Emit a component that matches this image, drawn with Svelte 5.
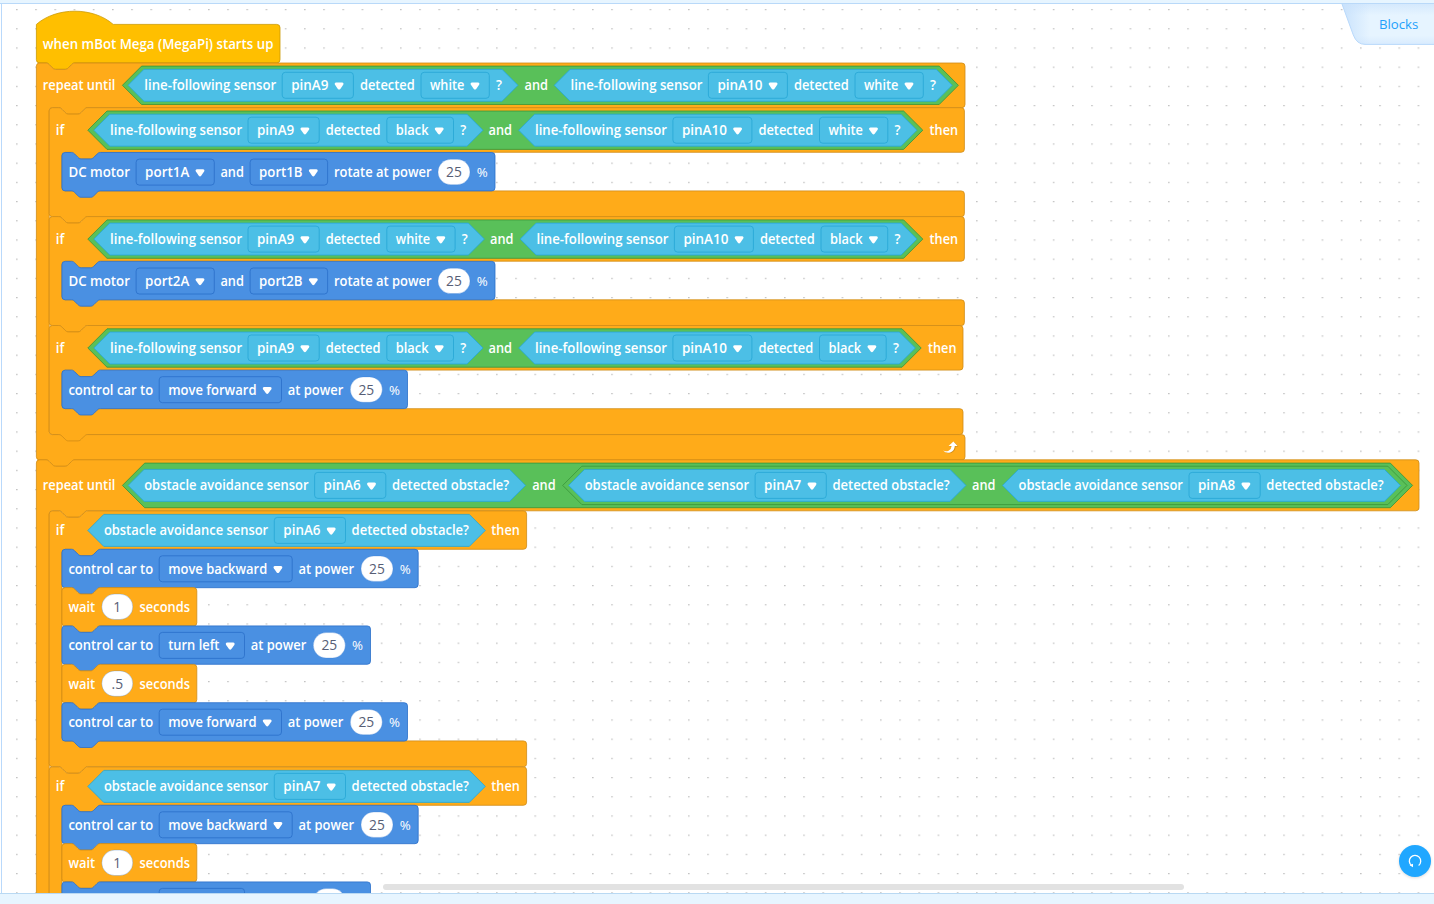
<script>
  const R = 3.2;
  const VIEW_BOTTOM = 893;
  const NOTCH = 'c 1.6,0 2.4,.8 3.2,1.6 l 3.2,3.2 c .8,.8 1.6,1.6 3.2,1.6 h 9.6 c 1.6,0 2.4,-.8 3.2,-1.6 l 3.2,-3.2 c .8,-.8 1.6,-1.6 3.2,-1.6';
  const TAB = 'c -1.6,0 -2.4,.8 -3.2,1.6 l -3.2,3.2 c -.8,.8 -1.6,1.6 -3.2,1.6 h -9.6 c -1.6,0 -2.4,-.8 -3.2,-1.6 l -3.2,-3.2 c -.8,-.8 -1.6,-1.6 -3.2,-1.6';
  const ARROW = 'M.3 9.2Q3 10.6 5.8 9.3Q8.6 8 8.8 4.6H5.8L10.6 0L14.8 4.6H12Q11.6 9.3 8 10.9Q3.3 12.6 .3 9.2Z';
  const corner = (dx, dy, sweep = 1) => `a ${R},${R} 0 0 ${sweep} ${dx * R},${dy * R}`;

  const top = (x, y, r) => `M ${x},${y + R} ${corner(1, -1)} H ${x + 9.6} ${NOTCH} H ${r - R} ${corner(1, 1)}`;
  const bottom = (x, r, b) => `V ${b - R} ${corner(-1, 1)} H ${x + 38.4} ${TAB} H ${x + R} ${corner(-1, -1)} Z`;
  const stack = (x, y, r, b) => `${top(x, y, r)} ${bottom(x, r, b)}`;
  const cBlock = (x, y, r, hb, mb, b) =>
    `${top(x, y, r)} V ${hb - R} ${corner(-1, 1)} H ${x + 12.8 + 38.4} ${TAB} H ${x + 12.8 + R} ${corner(-1, 1, 0)} V ${mb - R} ${corner(1, 1, 0)} H ${r - R} ${corner(1, 1)} ${bottom(x, r, b)}`;
  const hat = (x, y, r, b) => `M ${x},${y} c 20,-17.6 56.8,-17.6 76.8,0 H ${r - R} ${corner(1, 1)} ${bottom(x, r, b)}`;
  const hex = (x, r, cy, h) => {
    const s = h / 2;
    return `M ${x},${cy} L ${x + s},${cy - s} H ${r - s} L ${r},${cy} L ${r - s},${cy + s} H ${x + s} Z`;
  };

  const W = {
    'when mBot Mega (MegaPi) starts up': 230.6, 'repeat until': 72.5, if: 8.5, then: 28.5, and: 23.5,
    'line-following sensor': 132, detected: 54.8, '?': 6, 'obstacle avoidance sensor': 164.3,
    'detected obstacle?': 117.4, 'DC motor': 61.5, 'rotate at power': 97.5, '%': 11,
    'control car to': 84.7, 'at power': 55.5, wait: 26.8, seconds: 50.3,
    pinA9: 37.2, pinA10: 45, pinA6: 37.2, pinA7: 37.2, pinA8: 37.2, white: 34.3, black: 32.7,
    port1A: 44.2, port1B: 43.5, port2A: 44.2, port2B: 43.5,
    'move forward': 88.3, 'move backward': 99, 'turn left': 51.3
  };

  const shapes = [], labels = [], fields = [], bubbles = [];
  const shape = (kind, d) => shapes.push({ kind, d });
  const label = (x, cy, t) => {
    if (cy < VIEW_BOTTOM) labels.push({ x: x - 0.2, y: cy + 5, t, w: W[t] });
  };
  const field = (kind, x, cy, t) => {
    fields.push({ kind, x: x - 0.3, cy, t, w: W[t] });
    return x + W[t] + 34;
  };

  function line(x, r, cy, pin, color) {
    shape('sense', hex(x, r, cy, 32));
    let p = x + 16.5;
    label(p, cy, 'line-following sensor');
    p = field('sense', p + 138, cy, pin) + 6.4;
    label(p, cy, 'detected');
    p = field('sense', p + 61.2, cy, color) + 6.6;
    label(p, cy, '?');
  }
  function obstacle(x, r, cy, pin) {
    shape('sense', hex(x, r, cy, 32));
    label(x + 16.3, cy, 'obstacle avoidance sensor');
    const p = field('sense', x + 186.8, cy, pin);
    label(p + 6, cy, 'detected obstacle?');
  }
  function motor(y, a, b) {
    const cy = y + 19.6;
    shape('action', stack(61.9, y, 495, y + 38.4));
    label(68.6, cy, 'DC motor');
    field('action', 136.4, cy, a);
    label(220.6, cy, 'and');
    field('action', 250.4, cy, b);
    label(334.2, cy, 'rotate at power');
    bubbles.push({ x: 438, cy, w: 32, t: '25' });
    label(477, cy, '%');
  }
  function car(y, dir) {
    const cy = y + 19.5;
    const end = 159.4 + W[dir] + 34;
    shape('action', stack(61.9, y, end + 125.8, y + 38.4));
    label(68.6, cy, 'control car to');
    field('action', 159.5, cy, dir);
    label(end + 6.3, cy, 'at power');
    bubbles.push({ x: end + 68.6, cy, w: 32, t: '25' });
    label(end + 107.5, cy, '%');
  }
  function wait(y, t) {
    const cy = y + 19.3;
    shape('control', stack(61.9, y, 196.8, y + 38.4));
    label(68.6, cy, 'wait');
    bubbles.push({ x: 101.8, cy, w: 31, t });
    label(139.8, cy, 'seconds');
  }

  shape('event', hat(36.4, 24.4, 280, 62.9));
  label(43, 44.2, 'when mBot Mega (MegaPi) starts up');

  shape('control', cBlock(36.4, 63, 965, 107.7, 434.6, 460));
  label(43, 85.3, 'repeat until');
  shape('logic', hex(122.4, 958.4, 85.3, 38.4));
  line(128, 518, 85.3, 'pinA9', 'white');
  label(524.8, 85.3, 'and');
  line(554.2, 952.2, 85.3, 'pinA10', 'white');

  const checks = [
    [107.7, 964.4, 'black', 'white', 483, 518.7, 917, 922.8],
    [216.6, 964.4, 'white', 'black', 484.4, 520.2, 917, 922.8],
    [325.5, 963, 'black', 'black', 483, 518.7, 915.4, 921.2]
  ];
  for (const [y, r, c1, c2, r1, l2, r2, g] of checks) {
    const cy = y + 22.5;
    shape('control', cBlock(49.2, y, r, y + 44.6, y + 83.2, y + 109));
    label(56, cy, 'if');
    shape('logic', hex(87.8, g, cy, 38.4));
    line(93.8, r1, cy, 'pinA9', c1);
    label(l2 - 30, cy, 'and');
    line(l2, r2, cy, 'pinA10', c2);
    label(g + 7, cy, 'then');
  }
  motor(152.5, 'port1A', 'port1B');
  motor(261.4, 'port2A', 'port2B');
  car(370.2, 'move forward');

  shape('control', cBlock(36.4, 459.8, 1419, 510.8, 1100, 1130));
  label(43, 485.4, 'repeat until');
  shape('logic', hex(122.4, 1412.6, 485.4, 44.6));
  obstacle(128.1, 525.6, 485.4, 'pinA6');
  label(532.4, 485.4, 'and');
  shape('logic', hex(562.7, 1407, 485.4, 38.4));
  obstacle(568.6, 966, 485.4, 'pinA7');
  label(972.2, 485.4, 'and');
  obstacle(1002.5, 1400.4, 485.4, 'pinA8');

  const body = [
    [38.4, car, 'move backward'],
    [76.7, wait, '1'],
    [115, car, 'turn left'],
    [153.5, wait, '.5'],
    [191.8, car, 'move forward']
  ];
  for (const [y, pin] of [[510.9, 'pinA6'], [766.9, 'pinA7']]) {
    shape('control', cBlock(49.2, y, 526.6, y + 38.4, y + 230, y + 255.9));
    label(56, y + 19.5, 'if');
    obstacle(87.8, 485.3, y + 19.5, pin);
    label(491.5, y + 19.5, 'then');
    for (const [dy, draw, arg] of body) {
      if (y + dy < VIEW_BOTTOM) draw(y + dy, arg);
    }
  }
</script>

<div class="app">
  <div class="strip top"></div>
  <main>
    <svg class="canvas" width="1432" height="889" viewBox="2 4 1432 889">
      <defs>
        <pattern id="grid" x="16" y="9" width="19.2" height="19.2" patternUnits="userSpaceOnUse">
          <rect x="0" y="0" width="1.6" height="1.2" fill="#c2c2c2" />
        </pattern>
      </defs>
      <rect x="2" y="4" width="1432" height="889" fill="url(#grid)" />
      {#each shapes as s}<path class={s.kind} d={s.d} />{/each}
      {#each fields as f}
        <rect class={f.kind} x={f.x} y={f.cy - 13} width={f.w + 34} height="26" rx="3.2" />
        {#if f.cy < VIEW_BOTTOM}
          <text x={f.x + 9} y={f.cy + 5} textLength={f.w} lengthAdjust="spacingAndGlyphs">{f.t}</text>
          <path class="caret" transform="translate({f.x + f.w + 15.2} {f.cy - 2.8})" d="M1.5 0H7.5C8.8 0 9.3 1.2 8.6 2.3L5.7 6.4Q4.5 7.8 3.3 6.4L.4 2.3C-.3 1.2.2 0 1.5 0Z" />
        {/if}
      {/each}
      {#each labels as l}
        <text class:thin={l.t === '%'} x={l.x} y={l.y} textLength={l.w} lengthAdjust="spacingAndGlyphs">{l.t}</text>
      {/each}
      {#each bubbles as b}
        <rect class="bubble" x={b.x} y={b.cy - 12.8} width={b.w} height="25.4" rx="12.7" />
        {#if b.cy < VIEW_BOTTOM}
          <text class="value" x={b.x + b.w / 2} y={b.cy + 5}>{b.t}</text>
        {/if}
      {/each}
      <path class="loop-shadow" transform="translate(943.6 441.9)" d={ARROW} />
      <path class="loop" transform="translate(942.8 441.4)" d={ARROW} />
    </svg>

    <div class="drawer">
      <svg width="94" height="42" viewBox="0 0 94 42">
        <defs>
          <linearGradient id="drawerFill" x1="0" y1="0" x2="0" y2="1">
            <stop offset="0" stop-color="#d5e9fd" /><stop offset=".28" stop-color="#e6f4ff" />
            <stop offset=".78" stop-color="#e6f4ff" /><stop offset="1" stop-color="#d8ebfe" />
          </linearGradient>
          <linearGradient id="drawerSide" x1="0" y1="0" x2="1" y2="0">
            <stop offset="0" stop-color="#c9e2fc" /><stop offset=".3" stop-color="#c9e2fc" stop-opacity="0" />
          </linearGradient>
        </defs>
        <path d="M2 0L13.3 31Q16.8 40.4 25 40.4H94V0Z" fill="url(#drawerFill)" />
        <path d="M2 0L13.3 31Q16.8 40.4 25 40.4H94V0Z" fill="url(#drawerSide)" />
        <path d="M2 0L13.3 31Q16.8 40.4 25 40.4H94" fill="none" stroke="#b9d9fb" />
      </svg>
      <span>Blocks</span>
    </div>

    <div class="scrollbar"></div>
    <button class="reset" aria-label="Reset">
      <svg width="32" height="32" viewBox="0 0 32 32">
        <path d="M12.6 20.6A5.7 5.7 0 1 1 19.6 20.5" fill="none" stroke="#fff" stroke-width="1.3" />
        <path d="M10.6 20.3L14 18.8V22.2Z" fill="#fff" />
      </svg>
    </button>
  </main>
  <div class="strip foot"></div>
</div>

<style>
  :global(body) { margin: 0; overflow: hidden; }
  .app {
    width: 1434px;
    height: 904px;
    display: flex;
    flex-direction: column;
    background: #fff;
    font-family: 'Open Sans', 'Noto Sans', sans-serif;
  }
  .strip { box-sizing: border-box; background: #e7f5ff; flex: none; }
  .top { height: 4px; border-bottom: 1px solid #b9d9f9; }
  .foot { height: 11px; border-top: 1px solid #b9d9f3; }
  main {
    position: relative;
    flex: 1;
    min-height: 0;
    overflow: hidden;
    margin-left: 1px;
    border-left: 1px solid #b9d9fb;
  }
  .canvas { display: block; }
  .canvas text {
    font-size: 13.4px;
    font-weight: 650;
    fill: #fff;
    white-space: pre;
  }
  .canvas path, .canvas rect { stroke-width: 0.8; }
  .event { fill: #ffbf00; stroke: #cc9900; }
  .control { fill: #ffab19; stroke: #cf8b17; }
  .logic { fill: #59c059; stroke: #389438; }
  .sense { fill: #4cbfe6; stroke: #26a6d4; }
  .action { fill: #4a90e2; stroke: #2a6fc9; }
  .caret, .loop { fill: #fff; }
  .loop-shadow { fill: #cf8b17; }
  .bubble { fill: #fff; stroke: #3373cc; stroke-opacity: 0.35; }
  .canvas .thin { font-weight: 500; }
  .canvas .value { fill: #575e75; font-size: 13.8px; font-weight: 500; text-anchor: middle; }
  .drawer { position: absolute; top: 0; right: 0; height: 42px; }
  .drawer svg { display: block; }
  .drawer span {
    position: absolute;
    left: 39px;
    top: 11px;
    font-size: 13.2px;
    line-height: 18px;
    color: #23a0fb;
  }
  .scrollbar {
    position: absolute;
    left: 381px;
    bottom: 3px;
    width: 801px;
    height: 6px;
    border-radius: 3px;
    background: #e2e2e2;
  }
  .reset {
    position: absolute;
    right: 3px;
    bottom: 16px;
    width: 32px;
    height: 32px;
    padding: 0;
    border: 0;
    border-radius: 50%;
    background: #20a7ff;
    box-shadow: 0 1px 3px rgba(0, 0, 0, 0.14);
  }
  .reset svg { display: block; }
</style>
